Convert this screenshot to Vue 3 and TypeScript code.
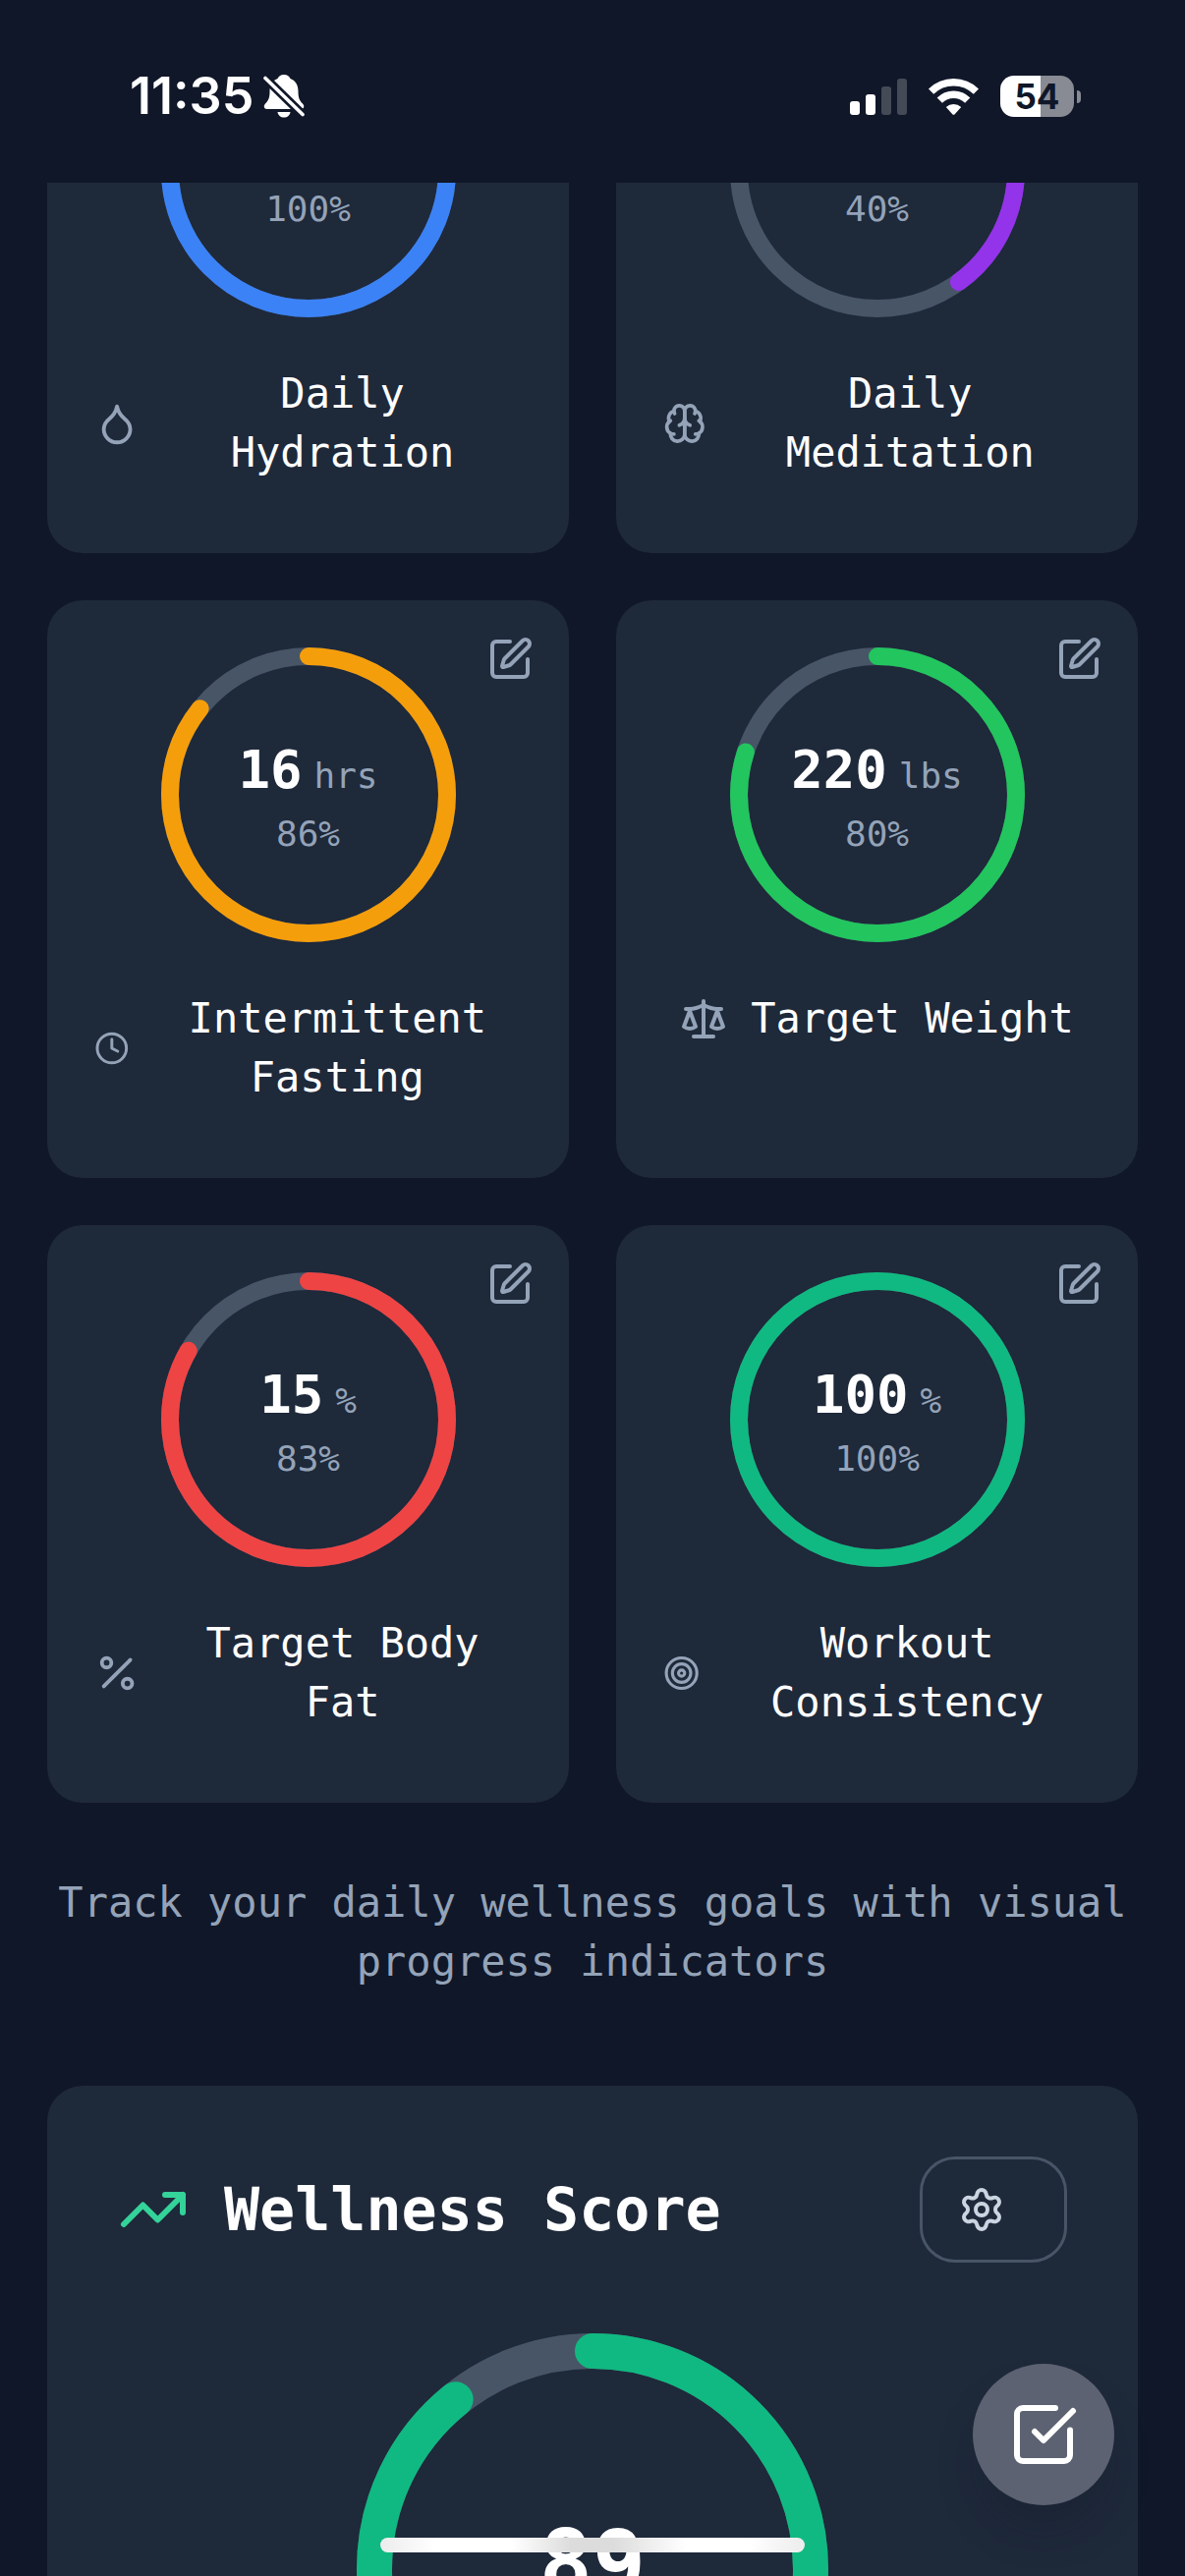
<script setup lang="ts">
interface Goal {
  name: string
  value?: string
  unit?: string
  progress: number
  color: string
  icon: string[]
}

const CIRCLE = (cx: number, cy: number, r: number): string =>
  `M${cx - r} ${cy}a${r} ${r} 0 1 0 ${2 * r} 0a${r} ${r} 0 1 0 ${-2 * r} 0`

const goals: Goal[] = [
  {
    name: 'Daily Hydration',
    progress: 100,
    color: '#3b82f6',
    icon: [
      'M12 22a7 7 0 0 0 7-7c0-2-1-3.9-3-5.5s-3.5-4-4-6.5c-.5 2.5-2 4.9-4 6.5C6 11.1 5 13 5 15a7 7 0 0 0 7 7z',
    ],
  },
  {
    name: 'Daily Meditation',
    progress: 40,
    color: '#9333ea',
    icon: [
      'M12 5a3 3 0 1 0-5.997.125 4 4 0 0 0-2.526 5.77 4 4 0 0 0 .556 6.588A4 4 0 1 0 12 18Z',
      'M12 5a3 3 0 1 1 5.997.125 4 4 0 0 1 2.526 5.77 4 4 0 0 1-.556 6.588A4 4 0 1 1 12 18Z',
      'M15 13a4.5 4.5 0 0 1-3-4 4.5 4.5 0 0 1-3 4',
      'M17.599 6.5a3 3 0 0 0 .399-1.375',
      'M6.003 5.125A3 3 0 0 0 6.401 6.5',
      'M3.477 10.896a4 4 0 0 1 .585-.396',
      'M19.938 10.5a4 4 0 0 1 .585.396',
      'M6 18a4 4 0 0 1-1.967-.516',
      'M19.967 17.484A4 4 0 0 1 18 18',
    ],
  },
  {
    name: 'Intermittent Fasting',
    value: '16',
    unit: 'hrs',
    progress: 85.7,
    color: '#f59e0b',
    icon: [CIRCLE(12, 12, 10), 'M12 6v6l4 2'],
  },
  {
    name: 'Target Weight',
    value: '220',
    unit: 'lbs',
    progress: 80,
    color: '#22c55e',
    icon: [
      'm16 16 3-8 3 8c-.87.65-1.92 1-3 1s-2.13-.35-3-1Z',
      'm2 16 3-8 3 8c-.87.65-1.92 1-3 1s-2.13-.35-3-1Z',
      'M7 21h10',
      'M12 3v18',
      'M3 7h2c2 0 5-1 7-2 2 1 5 2 7 2h2',
    ],
  },
  {
    name: 'Target Body Fat',
    value: '15',
    unit: '%',
    progress: 83.3,
    color: '#ef4444',
    icon: ['M19 5 5 19', CIRCLE(6.5, 6.5, 2.5), CIRCLE(17.5, 17.5, 2.5)],
  },
  {
    name: 'Workout Consistency',
    value: '100',
    unit: '%',
    progress: 100,
    color: '#10b981',
    icon: [CIRCLE(12, 12, 10), CIRCLE(12, 12, 6), CIRCLE(12, 12, 2)],
  },
]

const wellnessScore = 89.2
</script>

<template>
  <div class="screen">
    <header class="status">
      <div class="status-left">
        <time class="clock">11:35</time>
        <svg class="bell" viewBox="0 0 42 44" aria-label="Silent mode">
          <path
            d="M21 0c3.600 0 5.500 1.800 6.500 4 5.500 2.200 8 7 8 13 0 7 1.500 9.500 4.500 12.500C42.500 32 41 35 38.500 35h-35C1 35-.5 32 2 29.500 5 26.500 6.500 24 6.500 17c0-6 2.500-10.800 8-13C15.500 1.800 17.400 0 21 0z"
            fill="#fff"
          />
          <path d="M14.500 38h13c-.5 3.500-3 5.500-6.500 5.500s-6-2-6.500-5.500z" fill="#fff" />
          <path d="M2 3.500 40 40.500" stroke="#101728" stroke-width="9" />
          <path d="M2 3.500 40 40.500" stroke="#fff" stroke-width="3.600" stroke-linecap="round" />
        </svg>
      </div>
      <div class="status-right">
        <svg class="signal" viewBox="0 0 58 37" aria-label="Signal">
          <g fill="#fff">
            <rect x="0" y="23" width="10" height="14" rx="3" />
            <rect x="16" y="16" width="10" height="21" rx="3" />
            <g opacity="0.22">
              <rect x="32" y="8" width="10" height="29" rx="3" />
              <rect x="48" y="0" width="10" height="37" rx="3" />
            </g>
          </g>
        </svg>
        <svg class="wifi" viewBox="0 0 51 37" aria-label="Wi-Fi">
          <g fill="none" stroke="#fff" stroke-width="7.400">
            <path d="M2.600 13.200a32.500 32.500 0 0 1 45.800 0" />
            <path d="M11.300 22.200a20 20 0 0 1 28.400 0" />
          </g>
          <path d="M17.800 29a11.500 11.500 0 0 1 15.400 0l-6.500 7.200q-1.200 1.200-2.400 0z" fill="#fff" />
        </svg>
        <div class="battery">
          <span class="battery-body">54</span>
          <span class="battery-tip"></span>
        </div>
      </div>
    </header>

    <main class="content">
      <section class="goals">
        <article v-for="goal in goals" :key="goal.name" class="card goal">
          <button class="edit" type="button" :aria-label="`Edit ${goal.name}`">
            <svg class="icon" viewBox="0 0 24 24">
              <path d="M12 3H5a2 2 0 0 0-2 2v14a2 2 0 0 0 2 2h14a2 2 0 0 0 2-2v-7" />
              <path
                d="M18.375 2.625a1 1 0 0 1 3 3l-9.013 9.014a2 2 0 0 1-.853.505l-2.873.84a.5.5 0 0 1-.62-.62l.84-2.873a2 2 0 0 1 .506-.852z"
              />
            </svg>
          </button>
          <div class="ring">
            <svg viewBox="0 0 300 300">
              <circle class="track" cx="150" cy="150" r="141" stroke-width="18" />
              <circle
                class="bar"
                cx="150"
                cy="150"
                r="141"
                stroke-width="18"
                pathLength="100"
                :stroke="goal.color"
                :stroke-dasharray="`${goal.progress} 100`"
              />
            </svg>
            <div class="reading">
              <p v-if="goal.value" class="amount">
                {{ goal.value }}<span class="unit">{{ goal.unit }}</span>
              </p>
              <p class="percent">{{ Math.round(goal.progress) }}%</p>
            </div>
          </div>
          <div class="label">
            <svg class="icon" viewBox="0 0 24 24">
              <path v-for="(d, i) in goal.icon" :key="i" :d="d" />
            </svg>
            <h3>{{ goal.name }}</h3>
          </div>
        </article>
      </section>

      <p class="hint">Track your daily wellness goals with visual progress indicators</p>

      <section class="card score">
        <div class="score-head">
          <svg class="icon trend" viewBox="0 0 24 24">
            <path d="M16 7h6v6" />
            <path d="m22 7-8.500 8.500-5-5L2 17" />
          </svg>
          <h2>Wellness Score</h2>
          <button class="settings" type="button" aria-label="Wellness score settings">
            <svg class="icon" viewBox="0 0 24 24">
              <path
                d="M9.671 4.136a2.340 2.340 0 0 1 4.659 0 2.340 2.340 0 0 0 3.319 1.915 2.340 2.340 0 0 1 2.330 4.033 2.340 2.340 0 0 0 0 3.831 2.340 2.340 0 0 1-2.330 4.033 2.340 2.340 0 0 0-3.319 1.915 2.340 2.340 0 0 1-4.659 0 2.340 2.340 0 0 0-3.320-1.915 2.340 2.340 0 0 1-2.330-4.033 2.340 2.340 0 0 0 0-3.831A2.340 2.340 0 0 1 6.350 6.051a2.340 2.340 0 0 0 3.319-1.915"
              />
              <circle cx="12" cy="12" r="3" />
            </svg>
          </button>
        </div>
        <div class="ring ring-large">
          <svg viewBox="0 0 480 480">
            <circle class="track" cx="240" cy="240" r="222" stroke-width="36" />
            <circle
              class="bar"
              cx="240"
              cy="240"
              r="222"
              stroke-width="36"
              pathLength="100"
              stroke="#10b981"
              :stroke-dasharray="`${wellnessScore} 100`"
            />
          </svg>
          <p class="total">{{ Math.round(wellnessScore) }}</p>
        </div>
      </section>
    </main>

    <button class="fab" type="button" aria-label="Daily check-in">
      <svg class="icon" viewBox="0 0 24 24">
        <path d="M21 10.500V19a2 2 0 0 1-2 2H5a2 2 0 0 1-2-2V5a2 2 0 0 1 2-2h11" />
        <path d="m9 11 3 3L22 4" />
      </svg>
    </button>
    <div class="home-indicator"></div>
  </div>
</template>

<style>
body {
  margin: 0;
  background: #101728;
}
</style>

<style scoped>
.screen {
  display: flex;
  flex-direction: column;
  height: 100vh;
  overflow: hidden;
  background: #101728;
  color: #fff;
  font-family: 'DejaVu Sans Mono', 'Liberation Mono', monospace;
}

h2,
h3,
p {
  margin: 0;
}

button {
  padding: 0;
  border: 0;
  background: none;
  color: inherit;
  font: inherit;
}

svg {
  display: block;
}

.icon {
  width: 48px;
  height: 48px;
  fill: none;
  stroke: currentColor;
  stroke-width: 2;
  stroke-linecap: round;
  stroke-linejoin: round;
}

/* Status bar */
.status {
  display: flex;
  flex: none;
  align-items: center;
  justify-content: space-between;
  box-sizing: border-box;
  height: 186px;
  padding: 10px 106px 0 132px;
  font-family: Inter, 'Liberation Sans', sans-serif;
}

.status-left {
  display: flex;
  align-items: center;
  gap: 10px;
}

.clock {
  font-size: 52px;
  font-weight: 600;
  line-height: 60px;
}

.bell {
  width: 42px;
  height: 44px;
}

.status-right {
  display: flex;
  align-items: center;
  gap: 22px;
}

.signal {
  width: 58px;
  height: 37px;
}

.wifi {
  width: 51px;
  height: 37px;
}

.battery {
  display: flex;
  align-items: center;
  gap: 3px;
}

.battery-body {
  width: 75px;
  border-radius: 14px;
  background: linear-gradient(90deg, #fff 55%, #888b94 55%);
  color: #101728;
  font-size: 35px;
  font-weight: 700;
  line-height: 42px;
  text-align: center;
}

.battery-tip {
  width: 4px;
  height: 13px;
  border-radius: 0 6px 6px 0;
  background: #888b94;
}

/* Scrolled page */
.content {
  flex: 1;
  min-height: 0;
  padding: 0 48px;
  overflow: hidden;
}

.goals {
  display: grid;
  grid-template-columns: 1fr 1fr;
  gap: 48px;
  margin-top: -211px;
}

.card {
  border-radius: 36px;
  background: #1e293a;
}

.goal {
  position: relative;
  display: flex;
  flex-direction: column;
  align-items: center;
  gap: 48px;
  padding: 48px 48px 72px;
}

.edit {
  position: absolute;
  top: 36px;
  right: 36px;
  color: #94a3b8;
}

.ring {
  display: grid;
  place-items: center;
  width: 300px;
  height: 300px;
}

.ring > * {
  grid-area: 1 / 1;
}

.ring svg {
  width: 100%;
  height: 100%;
  transform: rotate(-90deg);
}

.ring circle {
  fill: none;
}

.track {
  stroke: #475567;
}

.bar {
  stroke-linecap: round;
}

.reading {
  display: grid;
  grid-template-rows: 80px 48px;
  text-align: center;
}

.amount {
  font-size: 54px;
  font-weight: 700;
  line-height: 78px;
}

.unit {
  margin-left: 12px;
  color: #94a3b8;
  font-size: 36px;
  font-weight: 500;
}

.percent {
  grid-row: 2;
  color: #94a3b8;
  font-size: 36px;
  line-height: 48px;
}

.label {
  display: flex;
  align-items: center;
  justify-content: center;
  gap: 24px;
  width: 100%;
}

.label .icon {
  color: #94a3b8;
}

.label h3 {
  font-size: 42px;
  font-weight: 500;
  line-height: 60px;
  text-align: center;
}

.hint {
  margin: 72px 0 96px;
  color: #94a3b8;
  font-size: 42px;
  line-height: 60px;
  text-align: center;
}

/* Wellness score */
.score {
  display: flex;
  flex-direction: column;
  gap: 72px;
  padding: 72px;
}

.score-head {
  display: flex;
  align-items: center;
  gap: 36px;
}

.trend {
  width: 72px;
  height: 72px;
  color: #34d399;
}

.score-head h2 {
  flex: 1;
  font-size: 60px;
  font-weight: 700;
  line-height: 84px;
}

.settings {
  padding: 27px 60px 27px 36px;
  border: 3px solid #475567;
  border-radius: 36px;
  color: #cbd5e1;
}

.ring-large {
  align-self: center;
  width: 480px;
  height: 480px;
}

.total {
  padding-bottom: 12px;
  font-size: 90px;
  font-weight: 700;
  line-height: 108px;
}

/* Overlays */
.fab {
  position: fixed;
  right: 72px;
  bottom: 72px;
  display: grid;
  place-items: center;
  width: 144px;
  height: 144px;
  border-radius: 50%;
  background: #5c6271;
  box-shadow: 0 30px 45px -9px rgba(16, 23, 40, 0.3);
}

.fab .icon {
  width: 72px;
  height: 72px;
}

.home-indicator {
  position: fixed;
  bottom: 24px;
  left: 50%;
  width: 432px;
  height: 15px;
  border-radius: 8px;
  background: linear-gradient(90deg, #ececec, #fff 13%, #fff 31%, #dcdcdc 45%, #dcdcdc 55%, #fff 72%, #fff 87%, #ececec);
  transform: translateX(-50%);
}
</style>
